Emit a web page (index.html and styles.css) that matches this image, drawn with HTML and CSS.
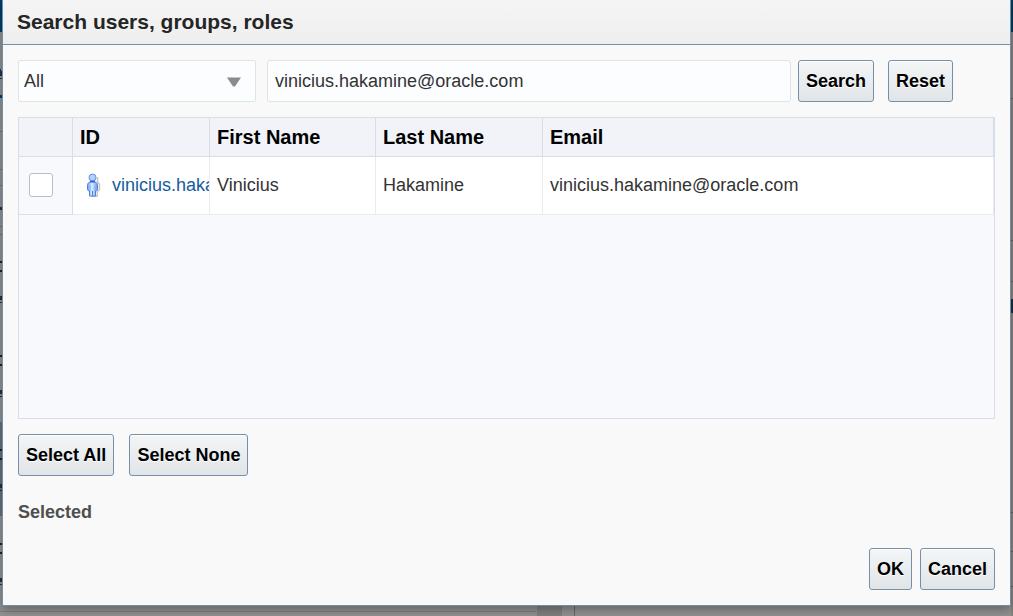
FILE: index.html
```html
<!DOCTYPE html>
<html lang="en">
<head>
<meta charset="utf-8">
<meta name="viewport" content="width=device-width, initial-scale=1">
<title>Search users, groups, roles</title>
<link rel="stylesheet" href="styles.css">
</head>
<body>
<svg class="backdrop backdrop-left" width="2" height="616" viewBox="0 0 2 616" aria-hidden="true">
  <path fill="#003d69" d="M0 0h2v32H0zM0 95h2v3H0z"/>
  <path fill="#1d3350" d="M0 69h1v2h1v5H0zM0 78h2v1H0zM0 207h2v3H0z"/>
  <path fill="#6f7278" d="M0 131h2v1H0zM0 169h2v1H0zM0 185h2v1H0zM0 226h2v1H0zM0 234h2v1H0z"/>
  <path fill="#66707c" d="M0 422h2v94H0z"/>
  <path fill="#222" d="M0 261h2v2H0zM0 270h2v2H0zM0 355h2v2H0zM0 364h2v2H0zM0 449h2v2H0zM0 458h2v2H0zM0 543h2v2H0zM0 552h2v2H0z"/>
  <path fill="#2c3138" d="M0 296h2v4H0zM0 302h2v1H0zM0 390h2v4H0zM0 396h2v1H0zM0 484h2v4H0zM0 490h2v1H0zM0 578h2v4H0zM0 584h2v1H0z"/>
</svg>
<svg class="backdrop backdrop-right" width="2" height="616" viewBox="0 0 2 616" aria-hidden="true">
  <path fill="#003d5f" d="M0 0h2v32H0z"/>
  <path fill="#5d5d5b" d="M0 98h2v1H0zM0 240h2v1H0zM0 281h2v1H0zM0 512h2v1H0zM0 551h2v1H0zM0 586h2v1H0z"/>
  <path fill="#14304a" d="M0 299h2v14H0z"/>
</svg>
<svg class="backdrop backdrop-foot" height="10" aria-hidden="true">
  <rect width="536" height="1" y="5" fill="#7d7d7d"/>
  <rect x="537" width="25" height="10" fill="#808080"/>
  <rect x="574" width="1" height="10" fill="#666"/>
</svg>
<main class="dialog" role="dialog" aria-labelledby="title">
  <header class="dialog-header"><h1 id="title">Search users, groups, roles</h1></header>
  <div class="dialog-body">
    <form class="search">
      <div class="select-wrap">
        <select class="field" aria-label="Type"><option>All</option></select>
        <svg class="arrow" width="14" height="10" viewBox="0 0 14 10" aria-hidden="true"><path d="M0 0.500h14L8 9.500H6z" fill="#878c91"/></svg>
      </div>
      <input class="field query" type="text" aria-label="Search text" value="vinicius.hakamine@oracle.com">
      <button class="btn" type="button">Search</button>
      <button class="btn reset" type="button">Reset</button>
    </form>
    <div class="results">
      <table>
        <colgroup><col class="c-check"><col class="c-id"><col class="c-first"><col class="c-last"><col></colgroup>
        <thead>
          <tr><th></th><th scope="col">ID</th><th scope="col">First Name</th><th scope="col">Last Name</th><th scope="col">Email</th></tr>
        </thead>
        <tbody>
          <tr>
            <td class="check"><input type="checkbox" aria-label="Select vinicius.hakamine@oracle.com"></td>
            <td><div class="user">
              <svg width="18" height="24" viewBox="0 0 18 24" aria-hidden="true">
                <defs>
                  <linearGradient id="body"><stop offset="0" stop-color="#6fa2f3"/><stop offset=".45" stop-color="#e2eeff"/><stop offset="1" stop-color="#6398ef"/></linearGradient>
                </defs>
                <path d="M7 23.500h6l.5-5 2-2v-5l-2-3V4" fill="none" stroke="#c9c4bf" stroke-width="1.500"/>
                <path d="M6 9C4 9.500 3.500 11 3.500 13v3.500c0 1 1.500 1.500 2 1.500v5h6v-5c.5 0 2-.5 2-1.500V13c0-2-.5-3.500-2.500-4z" fill="url(#body)" stroke="#4a80e2" stroke-linejoin="round"/>
                <path d="M6 12.500V18M11 12.500V18" stroke="#85b0f6"/>
                <path d="M8.500 18v4.500" stroke="#4a80e2"/>
                <circle cx="8.500" cy="4.500" r="3.500" fill="#b5d0fc" stroke="#5e90e8"/>
                <path d="M6 8.500h5" stroke="#2f66d2" stroke-width="1.500"/>
              </svg>
              <a href="#">vinicius.hakamine@oracle.com</a></div></td>
            <td>Vinicius</td><td>Hakamine</td><td>vinicius.hakamine@oracle.com</td>
          </tr>
        </tbody>
      </table>
    </div>
    <div class="actions">
      <button class="btn" type="button">Select All</button>
      <button class="btn" type="button">Select None</button>
    </div>
    <h2>Selected</h2>
    <footer class="dialog-footer">
      <button class="btn" type="button">OK</button>
      <button class="btn" type="button">Cancel</button>
    </footer>
  </div>
</main>
</body>
</html>
```
FILE: styles.css
```css
* { box-sizing: border-box; }
html, body { min-height: 100vh; }
body {
  margin: 0;
  padding: 0 2px 10px;
  display: flex;
  background: #929292;
  color: #333;
  font: 18px/24px "Liberation Sans", Arial, sans-serif;
  overflow: hidden;
}
.backdrop { position: absolute; top: 0; }
.backdrop-left { left: 0; background: #929292; }
.backdrop-right { right: 0; background: #85847f; }
.backdrop-foot { top: auto; bottom: 0; left: 0; width: 100%; }
.dialog {
  position: relative;
  flex: 1;
  min-width: 0;
  display: flex;
  flex-direction: column;
  border: 1px solid #6f8fa8;
  border-top: 0;
  background: #f9f9f9;
  box-shadow: 0 4px 10px rgba(0, 0, 0, .3);
}
.dialog-header {
  height: 45px;
  padding: 8px 14px;
  border-bottom: 1px solid #7590a8;
  background: linear-gradient(#f5f5f5, #eee);
}
h1 { margin: 0; font-size: 21px; line-height: 28px; color: #252525; }
.dialog-body {
  flex: 1;
  display: flex;
  flex-direction: column;
  padding: 15px;
}
.search { display: flex; }
.select-wrap { position: relative; width: 238px; margin-right: 11px; }
.field {
  height: 42px;
  border: 1px solid #dfe4e7;
  border-radius: 3px;
  background: #fcfdff;
  color: #333;
  font: inherit;
}
.select-wrap .field { width: 100%; padding: 0 5px; appearance: none; border-radius: 2px; }
.arrow { position: absolute; right: 15px; top: 17px; pointer-events: none; }
.query { flex: 1; min-width: 0; padding: 0 7px; margin-right: 7px; }
.btn {
  height: 42px;
  padding: 0 7px;
  border: 1px solid #7590a8;
  border-radius: 3px;
  background: linear-gradient(#f3f5f6, #e1e5e8);
  box-shadow: inset 0 1px #fff;
  color: #000;
  font: bold 18px/24px "Liberation Sans", Arial, sans-serif;
  text-shadow: 0 1px #fff;
  white-space: nowrap;
}
.reset { margin: 0 42px 0 14px; }
.results {
  flex: 1;
  margin-top: 15px;
  border: 1px solid #d6dfe6;
  background: #f8f9fd;
}
table { width: 100%; table-layout: fixed; border-collapse: separate; border-spacing: 0; }
.c-check { width: 54px; }
.c-id { width: 137px; }
.c-first { width: 166px; }
.c-last { width: 167px; }
th, td {
  padding: 0 7px;
  text-align: left;
  overflow: hidden;
  white-space: nowrap;
}
th {
  height: 39px;
  border-right: 1px solid #d6dfe6;
  border-bottom: 1px solid #d6dfe6;
  background: #f1f3f8;
  color: #000;
  font-size: 20px;
}
td {
  height: 58px;
  padding-bottom: 2px;
  border-right: 1px solid #e8ecef;
  border-bottom: 1px solid #e8ecef;
  background: #fff;
}
td.check { padding: 0 10px 2px; background: #f8f9fd; border-color: #d6dfe6; }
.check input {
  display: block;
  width: 24px;
  height: 24px;
  margin: 0;
  appearance: none;
  border: 1px solid #b5bfc8;
  border-radius: 3px;
  background: #fff;
}
.user { display: flex; align-items: center; gap: 10px; padding-left: 4px; margin-right: -7px; overflow: hidden; }
.user svg { flex: none; }
a { color: #145c9e; text-decoration: none; }
.actions { display: flex; gap: 15px; margin-top: 15px; }
h2 { margin: 24px 0 0; font-size: 18px; line-height: 24px; color: #4f4f4f; }
.dialog-footer { display: flex; justify-content: flex-end; gap: 8px; margin-top: 24px; }
```
